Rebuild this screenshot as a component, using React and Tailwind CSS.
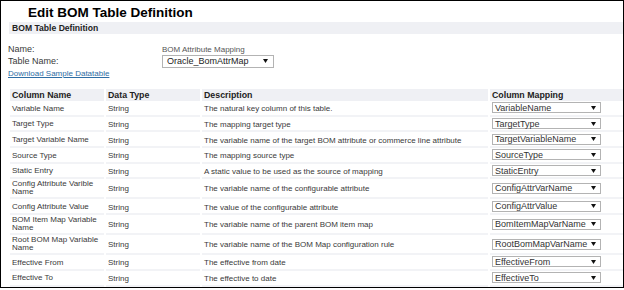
import React from "react";

const rows = [
  { name: ["Variable Name"], desc: "The natural key column of this table.", map: "VariableName" },
  { name: ["Target Type"], desc: "The mapping target type", map: "TargetType" },
  { name: ["Target Variable Name"], desc: "The variable name of the target BOM attribute or commerce line attribute", map: "TargetVariableName" },
  { name: ["Source Type"], desc: "The mapping source type", map: "SourceType" },
  { name: ["Static Entry"], desc: "A static value to be used as the source of mapping", map: "StaticEntry" },
  { name: ["Config Attribute Varible", "Name"], desc: "The variable name of the configurable attribute", map: "ConfigAttrVarName" },
  { name: ["Config Attribute Value"], desc: "The value of the configurable attribute", map: "ConfigAttrValue" },
  { name: ["BOM Item Map Variable", "Name"], desc: "The variable name of the parent BOM item map", map: "BomItemMapVarName" },
  { name: ["Root BOM Map Variable", "Name"], desc: "The variable name of the BOM Map configuration rule", map: "RootBomMapVarName" },
  { name: ["Effective From"], desc: "The effective from date", map: "EffectiveFrom" },
  { name: ["Effective To"], desc: "The effective to date", map: "EffectiveTo" },
];

function Arrow() {
  return (
    <svg width="5" height="4" viewBox="0 0 5 4" className="shrink-0">
      <path d="M0 0H5L2.5 4Z" fill="#111" />
    </svg>
  );
}

function Cell({ children, className = "" }) {
  return (
    <div className={"flex items-center pl-[2px] border-b-[2px] border-[#f2f3f6] " + className}>
      {children}
    </div>
  );
}

export default function App() {
  return (
    <div className="w-[624px] h-[290px] bg-white font-['Liberation_Sans',Arial,sans-serif] text-[#3a3a3a]">
      <div className="w-[624px] h-[288px] border border-black flex flex-col">
        <div className="h-[21px] pl-[27px] pt-[4px] text-[13.5px] font-bold leading-[15px] text-black">
          Edit BOM Table Definition
        </div>
        <div className="ml-[8px] h-[12px] bg-[#eff0f4] pl-[3px] text-[8.6px] font-bold leading-[12px] text-[#222]">
          BOM Table Definition
        </div>

        <div className="mt-[10px] pl-[7px] grid grid-cols-[154px_1fr]">
          <div className="h-[11px] text-[9px] leading-[11px]">Name:</div>
          <div className="h-[11px] text-[8px] leading-[11px] text-[#555]">BOM Attribute Mapping</div>
          <div className="h-[12.5px] flex items-center text-[9px] leading-[11px]">Table Name:</div>
          <div className="h-[12.5px]">
            <div className="w-[112px] h-[12.5px] border border-[#b3b3b3] flex items-center justify-between pl-[4px] pr-[5px] text-[9px] leading-[10px] text-[#222]">
              <span>Oracle_BomAttrMap</span>
              <Arrow />
            </div>
          </div>
          <div className="col-span-2 h-[11px] text-[8px] leading-[11px] text-[#2e6da4] underline">
            Download Sample Datatable
          </div>
        </div>

        <div className="mt-[10.5px] ml-[9px] grid grid-cols-[94px_94px_286px_1fr] gap-x-[2px]">
          {["Column Name", "Data Type", "Description", "Column Mapping"].map((h) => (
            <div key={h} className="h-[12px] bg-[#eff0f4] pl-[2px] text-[8.8px] font-bold leading-[12px] text-[#222]">
              {h}
            </div>
          ))}
          {rows.map((r) => {
            const dbl = r.name.length > 1;
            const h = dbl ? "h-[20px]" : "h-[15.7px]";
            const shift = dbl ? "" : "pt-[2px]";
            return (
              <React.Fragment key={r.map}>
                <Cell className={h + " " + shift}>
                  <div className="text-[8px] leading-[8.5px] whitespace-nowrap">
                    {r.name.map((n, i) => (
                      <div key={i}>{n}</div>
                    ))}
                  </div>
                </Cell>
                <Cell className={h + " " + shift}>
                  <span className="text-[8px] leading-[9px]">String</span>
                </Cell>
                <Cell className={h + " " + shift}>
                  <span className="text-[8px] leading-[9px] whitespace-nowrap">{r.desc}</span>
                </Cell>
                <Cell className={h}>
                  <div className="w-[109px] h-[11px] border border-[#b3b3b3] flex items-center justify-between pl-[2px] pr-[4px] text-[9px] leading-[10px] text-[#333] bg-white">
                    <span className="whitespace-nowrap">{r.map}</span>
                    <Arrow />
                  </div>
                </Cell>
              </React.Fragment>
            );
          })}
        </div>
      </div>
    </div>
  );
}
